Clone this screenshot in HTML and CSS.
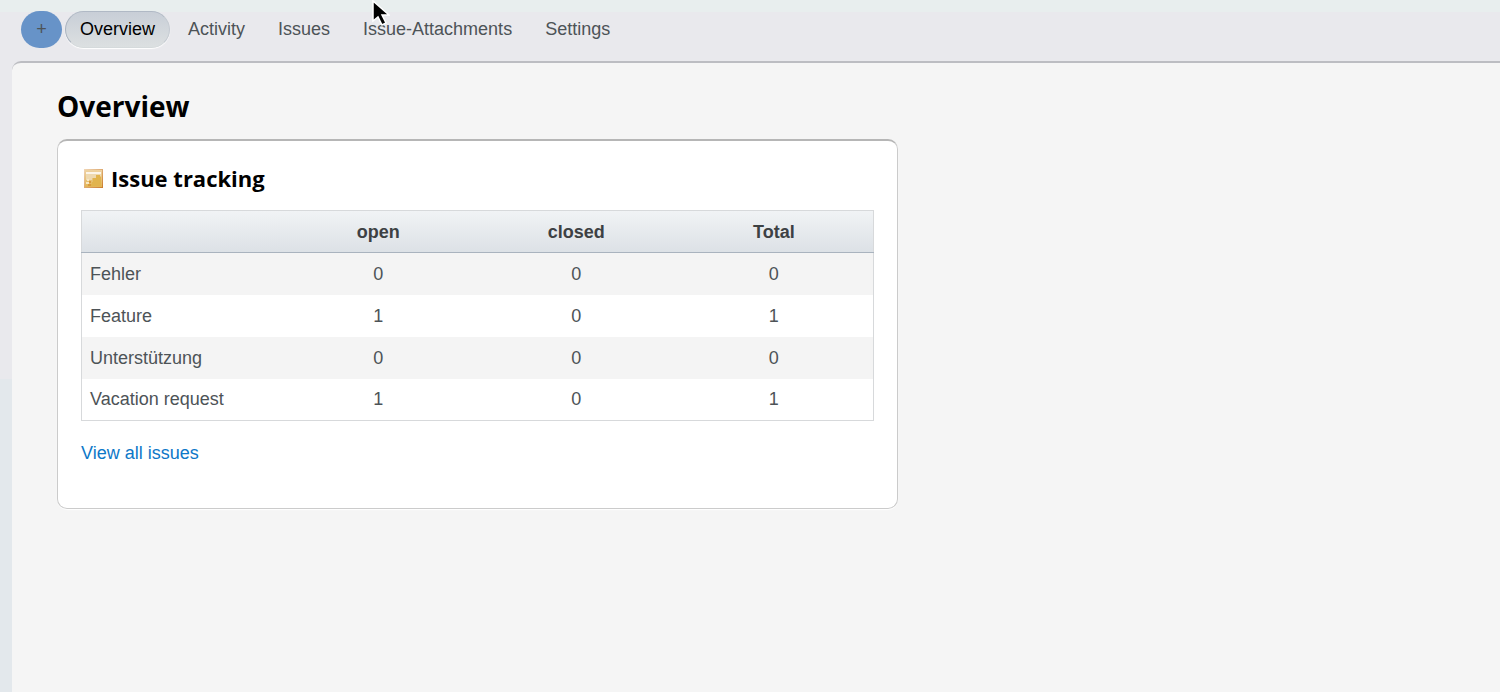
FILE: index.html
```html
<!DOCTYPE html>
<html lang="en">
<head>
<meta charset="utf-8">
<meta name="viewport" content="width=device-width, initial-scale=1">
<title>Overview</title>
<link rel="stylesheet" href="styles.css">
</head>
<body>
<nav class="menu" aria-label="Project">
  <button class="add" type="button" aria-label="New">+</button>
  <a class="tab selected" href="#overview">Overview</a>
  <a class="tab" href="#activity">Activity</a>
  <a class="tab" href="#issues">Issues</a>
  <a class="tab" href="#attachments">Issue-Attachments</a>
  <a class="tab" href="#settings">Settings</a>
</nav>
<main class="content">
  <h1 class="title">Overview</h1>
  <section class="box">
    <h2 class="box-title">
      <svg class="note" viewBox="0 0 20 20" aria-hidden="true">
        <defs>
          <linearGradient id="edge" x1="0" y1="0" x2="1" y2="1">
            <stop offset="0" stop-color="#f0d5b4"/>
            <stop offset="1" stop-color="#cc7f2e"/>
          </linearGradient>
          <linearGradient id="paper" x1="0" y1="0" x2="0" y2="1">
            <stop offset="0" stop-color="#eed3a4"/>
            <stop offset="1" stop-color="#e2b452"/>
          </linearGradient>
        </defs>
        <rect x="1.5" y="1.5" width="18" height="18" fill="url(#paper)" stroke="url(#edge)"/>
        <path d="M3 4h15v2H3z" fill="#fcf5e9"/>
        <path d="M3 6h15v2h-5v2H9v2H3z" fill="#eed9b0"/>
        <path d="M13 7h4v2h1v9H7v-2h2v-2h1v-4h3z" fill="#e1b44e"/>
        <path d="M4 11h2v2H4zM3 14h3v2H3z" fill="#f8e7c2"/>
        <path d="M6 13h2v2H6zM5 16h3v2H5z" fill="#d99a3c"/>
      </svg>
      Issue tracking
    </h2>
    <table class="issues">
      <thead>
        <tr><td></td><th scope="col">open</th><th scope="col">closed</th><th scope="col">Total</th></tr>
      </thead>
      <tbody>
        <tr><th scope="row">Fehler</th><td>0</td><td>0</td><td>0</td></tr>
        <tr><th scope="row">Feature</th><td>1</td><td>0</td><td>1</td></tr>
        <tr><th scope="row">Unterstützung</th><td>0</td><td>0</td><td>0</td></tr>
        <tr><th scope="row">Vacation request</th><td>1</td><td>0</td><td>1</td></tr>
      </tbody>
    </table>
    <a class="all" href="#all">View all issues</a>
  </section>
</main>
<svg class="pointer" viewBox="0 0 18 28" aria-hidden="true">
  <path d="M1 1v20l5-4 4 8 4-2-4-8h7z" fill="#000" stroke="#fff" stroke-width="1.5"/>
</svg>
</body>
</html>
```
FILE: styles.css
```css
* { box-sizing: border-box; }

body {
  margin: 0;
  min-height: 100vh;
  display: flex;
  flex-direction: column;
  font: 18px/21px "Liberation Sans", Arial, sans-serif;
  color: #4d5357;
  background: linear-gradient(#e8eeee 12px, #e9e9ed 12px, #e9e9ed 379px, #e3e8ec 379px);
}

.menu {
  display: flex;
  align-items: center;
  gap: 3px;
  padding: 11px 21px 13px;
}

.add {
  width: 41px;
  height: 37px;
  padding: 0;
  border: 0;
  border-radius: 20px;
  background: #6793c8;
  color: #4d5357;
  font: 18px/37px "Liberation Sans", Arial, sans-serif;
}

.tab {
  padding: 7px 14px;
  border: 1px solid transparent;
  border-radius: 19px;
  color: #4d5357;
  text-decoration: none;
}

.selected {
  color: #000;
  border-color: #b0b9c5 #c4cad1 #d5dadc #a9b2be;
  background: linear-gradient(#c8ced7, #dce0e1);
  box-shadow: 0 1px 1px #fff;
}

.content {
  flex: 1;
  margin-left: 12px;
  padding: 26px 0 40px 45px;
  border-top: 2px solid #bcbdc2;
  border-top-left-radius: 9px;
  background: #f5f5f5;
}

.title {
  margin: 0 0 15px;
  font: bold 28px/35px "Open Sans", sans-serif;
  color: #000;
}

.box {
  width: 58.25%;
  padding: 22px 23px 44px;
  border: 1px solid #cbcbcb;
  border-top: 2px solid #b6b6b6;
  border-radius: 10px;
  background: #fff;
  box-shadow: 0 1px 1px #fff;
}

.box-title {
  display: flex;
  align-items: center;
  gap: 8px;
  margin: 0 0 17px;
  padding-left: 2px;
  font: bold 22px/30px "Open Sans", sans-serif;
  color: #000;
}

.note {
  width: 20px;
  height: 20px;
}

.issues {
  width: 100%;
  table-layout: fixed;
  border-collapse: collapse;
  border: 1px solid #d7d9db;
  text-align: center;
}

.issues thead {
  background: linear-gradient(#f1f3f5, #dce1e6);
  border-bottom: 1px solid #a9b3be;
  color: #3d4144;
}

.issues th,
.issues td {
  height: 42px;
  padding: 1px 8px 0;
}

.issues tbody th {
  font-weight: normal;
  text-align: left;
}

.issues tbody tr:nth-child(odd) { background: #f4f4f4; }

.all {
  display: inline-block;
  margin-top: 22px;
  color: #0d78c8;
  text-decoration: none;
}

.pointer {
  position: absolute;
  top: 0;
  left: 372px;
  width: 18px;
  height: 28px;
}
```
